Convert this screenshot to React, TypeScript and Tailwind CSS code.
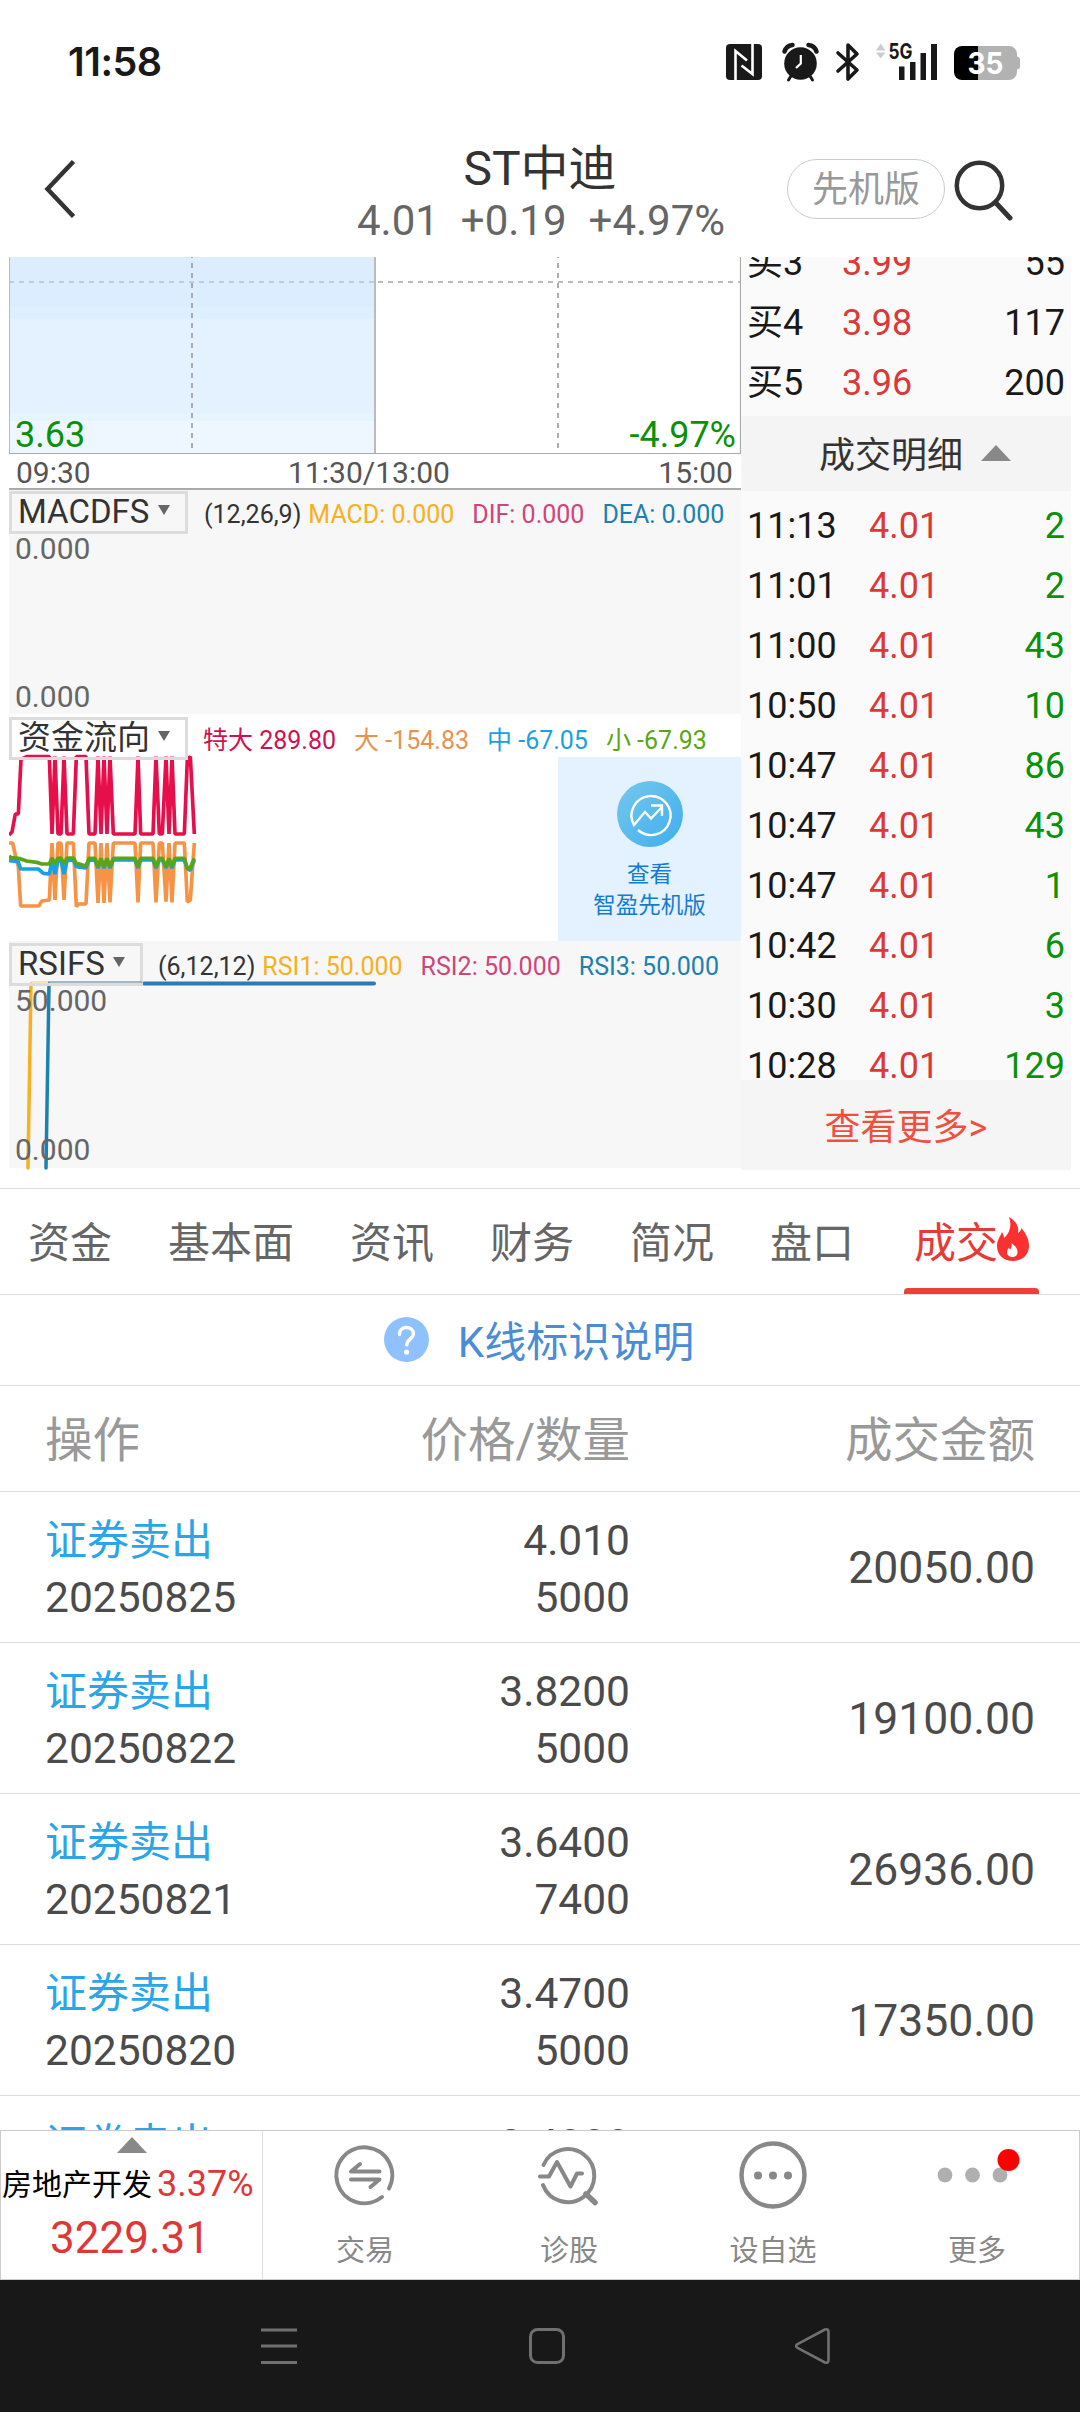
import type { ReactNode } from "react";

const asks = [
  { name: "买3", price: "3.99", qty: "55" },
  { name: "买4", price: "3.98", qty: "117" },
  { name: "买5", price: "3.96", qty: "200" },
];

const ticks = [
  { time: "11:13", price: "4.01", qty: "2" },
  { time: "11:01", price: "4.01", qty: "2" },
  { time: "11:00", price: "4.01", qty: "43" },
  { time: "10:50", price: "4.01", qty: "10" },
  { time: "10:47", price: "4.01", qty: "86" },
  { time: "10:47", price: "4.01", qty: "43" },
  { time: "10:47", price: "4.01", qty: "1" },
  { time: "10:42", price: "4.01", qty: "6" },
  { time: "10:30", price: "4.01", qty: "3" },
  { time: "10:28", price: "4.01", qty: "129" },
];

const tabs = ["资金", "基本面", "资讯", "财务", "简况", "盘口"];

const deals = [
  { date: "20250825", price: "4.010", qty: "5000", amount: "20050.00" },
  { date: "20250822", price: "3.8200", qty: "5000", amount: "19100.00" },
  { date: "20250821", price: "3.6400", qty: "7400", amount: "26936.00" },
  { date: "20250820", price: "3.4700", qty: "5000", amount: "17350.00" },
  { date: "20250819", price: "3.4000", qty: "5000", amount: "17000.00" },
];

function StatusBar() {
  return (
    <div className="flex h-[124px] items-center justify-between pl-[68px] pr-[60px]">
      <span className="font-['Inter',sans-serif] text-[39.500px] font-semibold leading-[124px] tracking-[-0.5px] text-[#191919]">11:58</span>
      <svg className="h-[40px] w-[296px] overflow-visible" viewBox="724 42 296 40" fill="none">
        {/* NFC */}
        <rect x="726" y="44" width="36" height="36" rx="4" fill="#191919" />
        <path d="M735.500 80V51l11.500 9.500M752.500 44v30l-11-8.500" stroke="#fff" strokeWidth="2.600" />
        {/* Alarm */}
        <circle cx="800.500" cy="63.500" r="16.300" fill="#191919" />
        <path d="M784.500 51.500q2-6 8-6.500M816.500 51.500q-2-6-8-6.500" stroke="#191919" strokeWidth="4.500" strokeLinecap="round" />
        <path d="M791 76l-2.500 4M810 76l2.500 4" stroke="#191919" strokeWidth="3" strokeLinecap="round" />
        <path d="M800.800 55v8.500l-4.800 4.500" stroke="#fff" strokeWidth="2.200" />
        {/* Bluetooth */}
        <path d="M838 53l19 17-9 9V45l9 9-19 17" stroke="#191919" strokeWidth="3.600" strokeLinejoin="round" strokeLinecap="round" />
        {/* Signal */}
        <path d="M876 50.500l4.700-7 4.700 7zM876 52.500l4.700 6 4.700-6z" fill="#ccc" />
        <text x="888.500" y="59" fontFamily="Inter, sans-serif" fontWeight="700" fontSize="21.500" textLength="24" lengthAdjust="spacingAndGlyphs" fill="#191919">5G</text>
        <path d="M899 66.500h5.500V80H899zM910 62h5.500v18H910zM920.500 53h5.500v27h-5.500zM931 44h6v36h-6z" fill="#191919" />
        {/* Battery */}
        <path d="M978 46h31a8 8 0 0 1 8 8v2.500q3 .5 3 3v7q0 2.500-3 3V72a8 8 0 0 1-8 8h-31z" fill="#b2b2b2" />
        <path d="M978 46h-16a8 8 0 0 0-8 8v18a8 8 0 0 0 8 8h16z" fill="#000" />
        <text x="967.500" y="74.300" fontFamily="Inter, sans-serif" fontWeight="700" fontSize="30" textLength="36" lengthAdjust="spacingAndGlyphs" fill="#fff">35</text>
      </svg>
    </div>
  );
}

function Header() {
  return (
    <header className="grid h-[133px] grid-cols-[340px_400px_340px]">
      <button className="flex items-start pl-[43px] pt-[35px]" aria-label="返回">
        <svg className="h-[60px] w-[34px]" viewBox="0 0 34 60" fill="none" stroke="#333" strokeWidth="4.500">
          <path d="M30.500 2.500L4.500 30l26 27.500" />
        </svg>
      </button>
      <div className="flex flex-col items-center whitespace-nowrap">
        <h1 className="mt-[17px] text-[48px] leading-[56px] text-[#333]">ST中迪</h1>
        <p className="mt-[1px] flex gap-[22px] pl-[2px] text-[42px] leading-[46px] text-[#666]">
          <span>4.01</span>
          <span>+0.19</span>
          <span>+4.97%</span>
        </p>
      </div>
      <div className="flex items-start gap-[8px] pl-[47px] pt-[35px]">
        <div className="h-[60px] w-[158px] rounded-full border-[1.500px] border-[#ccc] text-center text-[36px] leading-[61px] text-[#999]">先机版</div>
        <svg className="h-[62px] w-[62px]" viewBox="953 158 62 62" fill="none" stroke="#333">
          <circle cx="979.500" cy="184.500" r="22.700" strokeWidth="4.500" />
          <path d="M996 202l14 15" strokeWidth="5" strokeLinecap="round" />
        </svg>
      </div>
    </header>
  );
}

function PriceChart() {
  return (
    <div className="relative h-[197px]">
      <svg className="h-[197px] w-[732px]" viewBox="9 257 732 197">
        <rect x="9" y="257" width="366" height="50" fill="#dbedff" />
        <rect x="9" y="307" width="366" height="12" fill="#def0ff" />
        <rect x="9" y="319" width="366" height="94" fill="#e4f1fe" />
        <rect x="9" y="413" width="366" height="8" fill="#e4f5fe" />
        <rect x="9" y="421" width="366" height="32" fill="#eef7ff" />
        <path d="M9 282h366" stroke="#bccddd" strokeWidth="2" strokeDasharray="5 5" />
        <path d="M378 282h363" stroke="#bbb" strokeWidth="2" strokeDasharray="5 5" />
        <path d="M192 257v193M558 257v193" stroke="#999" strokeWidth="1.600" strokeDasharray="5 5" strokeDashoffset="4" />
        <path d="M375 257v197" stroke="#bbb" strokeWidth="2" />
        <path d="M9.500 257v196" stroke="#bbb" strokeWidth="1" />
        <path d="M740.500 257v196M9 453.500h732" stroke="#aaa" strokeWidth="1.200" />
      </svg>
      <div className="absolute inset-x-0 bottom-[1px] flex justify-between pl-[6px] pr-[5px] text-[36px] leading-[36px] text-[#0a910a]">
        <span>3.63</span>
        <span>-4.97%</span>
      </div>
    </div>
  );
}

function IndicatorName({ children, className }: { children: string; className: string }) {
  return (
    <div className={`flex items-center justify-between border-[3px] border-[#dcdcdc] pl-[6px] pr-[15px] text-[33px] leading-[34px] text-[#333] ${className}`}>
      <span className="whitespace-nowrap">{children}</span>
      <svg className="-mt-[4px] h-[10px] w-[12px]" viewBox="0 0 12 10">
        <path d="M0 0h12L6 10z" fill="#666" />
      </svg>
    </div>
  );
}

function MacdPanel() {
  return (
    <div className="flex h-[224px] flex-col bg-[#f7f7f7]">
      <div className="flex pt-[1px]">
        <IndicatorName className="h-[43px] w-[179px]">MACDFS</IndicatorName>
        <div className="flex gap-[18px] whitespace-nowrap pl-[16px] text-[25px] leading-[48px]">
          <span className="text-[#f6b022]"><span className="pr-[7px] text-[#333]">(12,26,9)</span>MACD: 0.000</span>
          <span className="text-[#cf4479]">DIF: 0.000</span>
          <span className="text-[#1c80b0]">DEA: 0.000</span>
        </div>
      </div>
      <div className="-mt-[5px] flex flex-1 flex-col justify-between pb-[2px] pl-[6px] text-[30px] leading-[30px] text-[#666]">
        <span>0.000</span>
        <span>0.000</span>
      </div>
    </div>
  );
}

// fund flow series, three plot units per pixel
const superLine = "27,405 36,396 46,342 55,342 63,178 80,170 148,170 156,402 165,170 174,402 183,402 192,170 201,402 220,402 229,170 258,170 267,402 285,402 294,170 303,402 312,170 321,402 330,170 340,402 405,402 414,170 422,402 459,402 468,170 478,402 487,402 498,170 507,402 516,170 525,402 553,402 562,178 571,170 583,402";
const bigLine = "27,429 38,429 48,475 55,500 62,618 117,618 125,603 148,600 156,429 165,600 174,429 183,429 192,600 201,429 220,429 229,620 236,612 258,612 267,429 285,429 294,609 303,429 312,609 321,429 330,607 340,429 405,429 414,607 422,429 459,429 468,607 478,429 487,429 498,605 507,429 516,607 525,429 553,429 562,606 571,600 583,429";
const midLine = "27,482 54,484 62,507 115,507 130,520 148,522 156,482 165,522 174,482 183,482 192,522 201,482 220,480 229,500 258,504 267,481 285,480 294,504 303,480 312,504 321,480 330,504 340,480 405,480 414,504 422,480 459,480 468,504 478,480 487,480 498,504 507,480 516,504 525,480 553,480 562,506 571,511 583,480";
const smallLine = "27,468 33,473 60,476 80,483 110,487 125,492 148,492 156,474 165,492 174,474 183,474 192,492 201,474 220,474 229,490 258,498 267,475 285,475 294,500 303,475 312,500 321,475 330,500 340,475 405,475 414,500 422,475 459,475 468,500 478,475 487,475 498,500 507,475 516,500 525,475 553,475 562,505 569,507 583,475";

function FundFlowPanel() {
  return (
    <div className="relative h-[227px]">
      <svg className="absolute left-0 top-0 h-[227px] w-[200px]" viewBox="27 42 600 681" fill="none" strokeWidth="11" strokeLinejoin="bevel">
        <polyline points={superLine} stroke="#e60f4b" />
        <polyline points={bigLine} stroke="#f79345" />
        <polyline points={midLine} stroke="#14a1ec" />
        <polyline points={smallLine} stroke="#58a615" />
      </svg>
      <div className="relative flex pt-[3px]">
        <IndicatorName className="h-[43px] w-[179px]">资金流向</IndicatorName>
        <div className="flex gap-[18px] whitespace-nowrap pl-[15px] text-[25px] leading-[48px]">
          <span className="text-[#cf1150]">特大 289.80</span>
          <span className="text-[#e8924e]">大 -154.83</span>
          <span className="text-[#1ba0e2]">中 -67.05</span>
          <span className="text-[#58a615]">小 -67.93</span>
        </div>
      </div>
      <div className="absolute bottom-0 right-0 flex h-[184px] w-[183px] flex-col items-center bg-[#e4f1fe] pt-[24px] text-[22.500px] leading-[31px] text-[#147bd1]">
        <svg className="mb-[12px] h-[66px] w-[66px] shrink-0" viewBox="0 0 66 66" fill="none">
          <defs>
            <linearGradient id="badge" x1="0" y1="0" x2="1" y2="1">
              <stop offset="0" stopColor="#76c8ec" />
              <stop offset="1" stopColor="#3eaeee" />
            </linearGradient>
          </defs>
          <circle cx="33" cy="33" r="33" fill="url(#badge)" />
          <path d="M21 49a19.500 19.500 0 1 0-4-5l11-13 6 6.500L45 26M34 24.500h11V35" stroke="#fff" strokeWidth="2.400" />
        </svg>
        <span>查看</span>
        <span>智盈先机版</span>
      </div>
    </div>
  );
}

function RsiPanel() {
  return (
    <div className="relative flex h-[227px] flex-col bg-[#f7f7f7]">
      <svg className="absolute left-0 top-0 h-[229px] w-[370px]" viewBox="9 941 370 229" fill="none">
        <path d="M28 1168l3-184" stroke="#f6b022" strokeWidth="3.500" strokeLinecap="round" />
        <path d="M46 1168l3-184" stroke="#1c80b0" strokeWidth="3.500" strokeLinecap="round" />
        <path d="M144 983.500h230" stroke="#2f7ab0" strokeWidth="4" strokeLinecap="round" />
      </svg>
      <div className="relative flex pt-[2px]">
        <IndicatorName className="h-[43px] w-[134px]">RSIFS</IndicatorName>
        <div className="flex gap-[18px] whitespace-nowrap pl-[15px] text-[25px] leading-[48px]">
          <span className="text-[#f6b022]"><span className="pr-[7px] text-[#333]">(6,12,12)</span>RSI1: 50.000</span>
          <span className="text-[#cf4479]">RSI2: 50.000</span>
          <span className="text-[#1c80b0]">RSI3: 50.000</span>
        </div>
        <svg className="absolute left-0 top-[40px] h-[2px] w-[134px]" viewBox="0 0 134 2">
          <path d="M22 1h17" stroke="#f9cf80" strokeWidth="1" />
          <path d="M39 1h94" stroke="#4f7694" strokeWidth="1" />
        </svg>
      </div>
      <div className="relative -mt-[5px] flex flex-1 flex-col justify-between pb-[3px] pl-[6px] text-[30px] leading-[30px] text-[#666]">
        <span>50.000</span>
        <span>0.000</span>
      </div>
    </div>
  );
}

function OrderBook() {
  return (
    <div className="flex w-[330px] flex-col bg-[#fafafa] text-[36px] leading-[60px] text-[#191919]">
      <div className="flex h-[159px] flex-col justify-end overflow-hidden pb-[3px]">
        {asks.map((row) => (
          <div key={row.name} className="flex h-[60px] shrink-0 pl-[6px] pr-[6px]">
            <span className="w-[95px]">{row.name}</span>
            <span className="text-[#dc3838]">{row.price}</span>
            <span className="ml-auto">{row.qty}</span>
          </div>
        ))}
      </div>
      <div className="flex h-[75px] items-center gap-[18px] bg-[#f4f4f4] pl-[78px] text-[#333]">
        <span className="pt-[6px] leading-[69px]">成交明细</span>
        <svg className="h-[16px] w-[30px]" viewBox="0 0 30 16">
          <path d="M15 0l15 16H0z" fill="#888" />
        </svg>
      </div>
      <div className="h-[589px] overflow-hidden pt-[5px]">
        {ticks.map((row, i) => (
          <div key={i} className="flex h-[60px] pl-[6px] pr-[6px]">
            <span className="w-[122px]">{row.time}</span>
            <span className="text-[#dc3838]">{row.price}</span>
            <span className="ml-auto text-[#0a910a]">{row.qty}</span>
          </div>
        ))}
      </div>
      <button className="h-[90px] bg-[#f5f5f5] pt-[6px] text-center leading-[84px] text-[#f05040]">查看更多&gt;</button>
    </div>
  );
}

function Tabs() {
  return (
    <nav className="flex h-[107px] gap-[56px] whitespace-nowrap border-y border-[#ddd] pl-[28px] text-[42px] leading-[110px] text-[#666]">
      {tabs.map((tab) => (
        <span key={tab}>{tab}</span>
      ))}
      <span className="relative ml-[4px] flex text-[#e63a36]">
        成交
        <svg className="-ml-[1px] mt-[28px] h-[44px] w-[32px]" viewBox="0 0 32 44">
          <path d="M12 0c8 5 10 10 9 16 2-1 3-3 3.500-5C29 17 32 22 32 29c0 9-7 15-16 15S0 38 0 29c0-6 3-9 5-14 1 2 2 4 2 6 6-5 8-12 5-21z" fill="#fb3030" />
          <path d="M14.500 26c5 4 6 6 6 9.500 0 3-2.500 4.500-5 4.500s-5.500-1.500-5.500-4.500c0-2 .8-3.500 2-5 .2 1 .6 1.500 1.300 2 1.200-1.500 1.800-3.500 1.200-6.500z" fill="#fff" />
        </svg>
        <i className="absolute -left-[10px] bottom-0 h-[6px] w-[135px] rounded-t-[4px] bg-[#ef3e3b]" />
      </span>
    </nav>
  );
}

function DealTable() {
  return (
    <section className="h-[836px] overflow-hidden">
      <div className="flex h-[91px] items-center justify-center gap-[29px] border-b border-[#ddd] pr-[2px] text-[42px] text-[#4a8cd6]">
        <svg className="h-[45px] w-[45px]" viewBox="0 0 45 45" fill="none">
          <circle cx="22.500" cy="22.500" r="22.500" fill="#8fc1ff" />
          <path d="M15.500 17.500c0-4.500 3-7 7-7s7 2.500 7 6.300c0 5-6.700 5.200-6.700 11.200" stroke="#fff" strokeWidth="3.400" strokeLinecap="round" />
          <circle cx="22.500" cy="35" r="2.600" fill="#fff" />
        </svg>
        <span className="pt-[5px] leading-[85px]">K线标识说明</span>
      </div>
      <div className="grid h-[106px] grid-cols-[285px_300px_405px] border-b border-[#ddd] pl-[45px] text-[47.500px] leading-[110px] text-[#999]">
        <span>操作</span>
        <span className="text-right">价格/数量</span>
        <span className="text-right">成交金额</span>
      </div>
      {deals.map((deal) => (
        <div key={deal.date} className="grid h-[151px] grid-cols-[285px_300px_405px] border-b border-[#ddd] pl-[45px] pt-[20px] text-[42.500px] leading-[57px] text-[#4b4b4b]">
          <div>
            <p className="text-[42px] text-[#29a5e8]">证券卖出</p>
            <p>{deal.date}</p>
          </div>
          <div className="text-right">
            <p>{deal.price}</p>
            <p>{deal.qty}</p>
          </div>
          <p className="text-right text-[44.500px] leading-[113px]">{deal.amount}</p>
        </div>
      ))}
    </section>
  );
}

function BarItem({ label, children }: { label: string; children: ReactNode }) {
  return (
    <button className="flex w-[204px] flex-col items-center text-[29px] leading-[40px] text-[#888]">
      <svg className="mb-[16px] mt-[4px] h-[80px] w-[100px] shrink-0" viewBox="0 0 100 80" fill="none" stroke="#888" strokeWidth="4" strokeLinecap="round" strokeLinejoin="round">
        {children}
      </svg>
      {label}
    </button>
  );
}

function BottomBar() {
  return (
    <div className="flex h-[150px] border border-[#ccc] bg-white">
      <div className="flex w-[262px] shrink-0 flex-col items-center border-r border-[#ddd] pt-[6px] whitespace-nowrap text-[#dc3838]">
        <svg className="h-[16px] w-[30px]" viewBox="0 0 30 16">
          <path d="M15 0l15 16H0z" fill="#888" />
        </svg>
        <div className="mt-[4px] flex h-[54px] w-full items-center gap-[5px] pl-[1px] leading-[54px]">
          <span className="pt-[2px] text-[30px] leading-[52px] text-black">房地产开发</span>
          <span className="text-[36px]">3.37%</span>
        </div>
        <span className="pr-[3px] text-[44px] leading-[54px]">3229.31</span>
      </div>
      <BarItem label="交易">
        <path d="M74 53.500A28 28 0 1 0 67 62" />
        <path d="M64.500 36.500H36l9-7.500M36 44.500h28.500l-9 7.500" />
      </BarItem>
      <BarItem label="诊股">
        <path d="M24.500 30A26.500 26.500 0 1 1 24 50" />
        <path d="M67 59l9 8.500" strokeWidth="5.500" />
        <path d="M21 41.500h9L38 27l13.500 24.500L58 38.500h5" />
      </BarItem>
      <BarItem label="设自选">
        <circle cx="50" cy="40" r="31.500" strokeWidth="4.500" />
        <g fill="#888" stroke="none">
          <circle cx="35" cy="40.500" r="4" />
          <circle cx="50" cy="40.500" r="4" />
          <circle cx="65" cy="40.500" r="4" />
        </g>
      </BarItem>
      <BarItem label="更多">
        <g stroke="none">
          <circle cx="18" cy="40" r="7.400" fill="#afafaf" />
          <circle cx="45.500" cy="40" r="7.400" fill="#afafaf" />
          <circle cx="73" cy="40" r="7.400" fill="#afafaf" />
          <circle cx="81.500" cy="25" r="11" fill="#f00" />
        </g>
      </BarItem>
    </div>
  );
}

function SystemNav() {
  return (
    <div className="flex h-[132px] items-center bg-[#181818] pl-[260px]">
      <svg className="h-[38px] w-[38px]" viewBox="0 0 38 38" stroke="#707070" strokeWidth="3">
        <path d="M1 3h36M1 19h36M1 35.500h36" />
      </svg>
      <svg className="ml-[230px] h-[38px] w-[38px]" viewBox="0 0 38 38" fill="none" stroke="#707070" strokeWidth="3">
        <rect x="2.500" y="2.500" width="33" height="33" rx="7" />
      </svg>
      <svg className="ml-[228px] h-[38px] w-[38px]" viewBox="0 0 38 38" fill="none" stroke="#707070" strokeWidth="2.600" strokeLinejoin="round">
        <path d="M31 2.500L3.500 17.200q-2.800 1.800 0 3.600L31 35.500q3.500 1 3.500-2.500V5q0-3.500-3.500-2.500z" />
      </svg>
    </div>
  );
}

export default function App() {
  return (
    <div className="flex h-[2412px] w-[1080px] flex-col overflow-hidden bg-white font-['Roboto','Noto_Sans_CJK_SC',sans-serif]">
      <StatusBar />
      <Header />
      <main className="flex h-[931px] pl-[9px]">
        <div className="w-[732px]">
          <PriceChart />
          <div className="flex h-[36px] justify-between border-b-2 border-[#aaa] pl-[7px] pr-[8px] text-[30px] leading-[38px] text-[#555]">
            <span>09:30</span>
            <span className="pr-[11px]">11:30/13:00</span>
            <span>15:00</span>
          </div>
          <MacdPanel />
          <FundFlowPanel />
          <RsiPanel />
        </div>
        <div className="h-[913px]">
          <OrderBook />
        </div>
      </main>
      <Tabs />
      <DealTable />
      <BottomBar />
      <SystemNav />
    </div>
  );
}
